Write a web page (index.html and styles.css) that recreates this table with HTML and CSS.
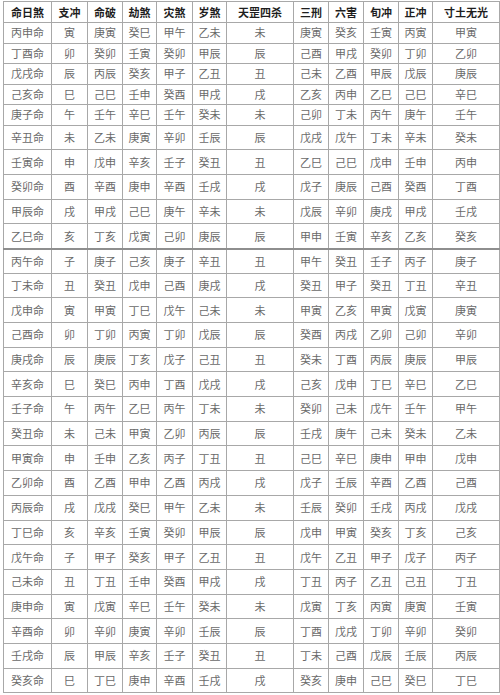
FILE: index.html
```html
<!DOCTYPE html>
<html lang="zh-CN">
<head>
<meta charset="utf-8">
<title>命日煞</title>
<link rel="stylesheet" href="styles.css">
</head>
<body>
<div class="page">
<table class="sha">
<colgroup>
<col class="c-name"><col class="c-1"><col class="c-2"><col class="c-3"><col class="c-4"><col class="c-5"><col class="c-wide"><col class="c-6"><col class="c-7"><col class="c-8"><col class="c-9"><col class="c-last">
</colgroup>
<thead>
<tr class="head"><th>命日煞</th><th>支冲</th><th>命破</th><th>劫煞</th><th>灾煞</th><th>岁煞</th><th>天罡四杀</th><th>三刑</th><th>六害</th><th>旬冲</th><th>正冲</th><th>寸土无光</th></tr>
</thead>
<tbody>
<tr class="short"><td>丙申命</td><td>寅</td><td>庚寅</td><td>癸巳</td><td>甲午</td><td>乙未</td><td>未</td><td>庚寅</td><td>癸亥</td><td>壬寅</td><td>丙寅</td><td>甲寅</td></tr>
<tr class="short"><td>丁酉命</td><td>卯</td><td>癸卯</td><td>壬寅</td><td>癸卯</td><td>甲辰</td><td>辰</td><td>己酉</td><td>甲戌</td><td>癸卯</td><td>丁卯</td><td>乙卯</td></tr>
<tr class="short"><td>戊戌命</td><td>辰</td><td>丙辰</td><td>癸亥</td><td>甲子</td><td>乙丑</td><td>丑</td><td>己未</td><td>乙酉</td><td>甲辰</td><td>戊辰</td><td>庚辰</td></tr>
<tr class="short"><td>己亥命</td><td>巳</td><td>己巳</td><td>壬申</td><td>癸酉</td><td>甲戌</td><td>戌</td><td>乙亥</td><td>丙申</td><td>乙巳</td><td>己巳</td><td>辛巳</td></tr>
<tr class="short"><td>庚子命</td><td>午</td><td>壬午</td><td>辛巳</td><td>壬午</td><td>癸未</td><td>未</td><td>己卯</td><td>丁未</td><td>丙午</td><td>庚午</td><td>壬午</td></tr>
<tr><td>辛丑命</td><td>未</td><td>乙未</td><td>庚寅</td><td>辛卯</td><td>壬辰</td><td>辰</td><td>戊戌</td><td>戊午</td><td>丁未</td><td>辛未</td><td>癸未</td></tr>
<tr><td>壬寅命</td><td>申</td><td>戊申</td><td>辛亥</td><td>壬子</td><td>癸丑</td><td>丑</td><td>乙巳</td><td>己巳</td><td>戊申</td><td>壬申</td><td>丙申</td></tr>
<tr><td>癸卯命</td><td>酉</td><td>辛酉</td><td>庚申</td><td>辛酉</td><td>壬戌</td><td>戌</td><td>戊子</td><td>庚辰</td><td>己酉</td><td>癸酉</td><td>丁酉</td></tr>
<tr><td>甲辰命</td><td>戌</td><td>甲戌</td><td>己巳</td><td>庚午</td><td>辛未</td><td>未</td><td>戊辰</td><td>辛卯</td><td>庚戌</td><td>甲戌</td><td>壬戌</td></tr>
<tr><td>乙巳命</td><td>亥</td><td>丁亥</td><td>戊寅</td><td>己卯</td><td>庚辰</td><td>辰</td><td>甲申</td><td>壬寅</td><td>辛亥</td><td>乙亥</td><td>癸亥</td></tr>
<tr class="split"><td>丙午命</td><td>子</td><td>庚子</td><td>己亥</td><td>庚子</td><td>辛丑</td><td>丑</td><td>甲午</td><td>癸丑</td><td>壬子</td><td>丙子</td><td>庚子</td></tr>
<tr><td>丁未命</td><td>丑</td><td>癸丑</td><td>戊申</td><td>己酉</td><td>庚戌</td><td>戌</td><td>癸丑</td><td>甲子</td><td>癸丑</td><td>丁丑</td><td>辛丑</td></tr>
<tr><td>戊申命</td><td>寅</td><td>甲寅</td><td>丁巳</td><td>戊午</td><td>己未</td><td>未</td><td>甲寅</td><td>乙亥</td><td>甲寅</td><td>戊寅</td><td>庚寅</td></tr>
<tr><td>己酉命</td><td>卯</td><td>丁卯</td><td>丙寅</td><td>丁卯</td><td>戊辰</td><td>辰</td><td>癸酉</td><td>丙戌</td><td>乙卯</td><td>己卯</td><td>辛卯</td></tr>
<tr><td>庚戌命</td><td>辰</td><td>庚辰</td><td>丁亥</td><td>戊子</td><td>己丑</td><td>丑</td><td>癸未</td><td>丁酉</td><td>丙辰</td><td>庚辰</td><td>甲辰</td></tr>
<tr><td>辛亥命</td><td>巳</td><td>癸巳</td><td>丙申</td><td>丁酉</td><td>戊戌</td><td>戌</td><td>己亥</td><td>戊申</td><td>丁巳</td><td>辛巳</td><td>乙巳</td></tr>
<tr><td>壬子命</td><td>午</td><td>丙午</td><td>乙巳</td><td>丙午</td><td>丁未</td><td>未</td><td>癸卯</td><td>己未</td><td>戊午</td><td>壬午</td><td>甲午</td></tr>
<tr><td>癸丑命</td><td>未</td><td>己未</td><td>甲寅</td><td>乙卯</td><td>丙辰</td><td>辰</td><td>壬戌</td><td>庚午</td><td>己未</td><td>癸未</td><td>乙未</td></tr>
<tr><td>甲寅命</td><td>申</td><td>壬申</td><td>乙亥</td><td>丙子</td><td>丁丑</td><td>丑</td><td>己巳</td><td>辛巳</td><td>庚申</td><td>甲申</td><td>戊申</td></tr>
<tr><td>乙卯命</td><td>酉</td><td>乙酉</td><td>甲申</td><td>乙酉</td><td>丙戌</td><td>戌</td><td>戊子</td><td>壬辰</td><td>辛酉</td><td>乙酉</td><td>己酉</td></tr>
<tr><td>丙辰命</td><td>戌</td><td>戊戌</td><td>癸巳</td><td>甲午</td><td>乙未</td><td>未</td><td>壬辰</td><td>癸卯</td><td>壬戌</td><td>丙戌</td><td>戊戌</td></tr>
<tr><td>丁巳命</td><td>亥</td><td>辛亥</td><td>壬寅</td><td>癸卯</td><td>甲辰</td><td>辰</td><td>戊申</td><td>甲寅</td><td>癸亥</td><td>丁亥</td><td>己亥</td></tr>
<tr><td>戊午命</td><td>子</td><td>甲子</td><td>癸亥</td><td>甲子</td><td>乙丑</td><td>丑</td><td>戊午</td><td>乙丑</td><td>甲子</td><td>戊子</td><td>丙子</td></tr>
<tr><td>己未命</td><td>丑</td><td>丁丑</td><td>壬申</td><td>癸酉</td><td>甲戌</td><td>戌</td><td>丁丑</td><td>丙子</td><td>乙丑</td><td>己丑</td><td>丁丑</td></tr>
<tr><td>庚申命</td><td>寅</td><td>戊寅</td><td>辛巳</td><td>壬午</td><td>癸未</td><td>未</td><td>戊寅</td><td>丁亥</td><td>丙寅</td><td>庚寅</td><td>壬寅</td></tr>
<tr><td>辛酉命</td><td>卯</td><td>辛卯</td><td>庚寅</td><td>辛卯</td><td>壬辰</td><td>辰</td><td>丁酉</td><td>戊戌</td><td>丁卯</td><td>辛卯</td><td>癸卯</td></tr>
<tr><td>壬戌命</td><td>辰</td><td>甲辰</td><td>辛亥</td><td>壬子</td><td>癸丑</td><td>丑</td><td>丁未</td><td>己酉</td><td>戊辰</td><td>壬辰</td><td>丙辰</td></tr>
<tr><td>癸亥命</td><td>巳</td><td>丁巳</td><td>庚申</td><td>辛酉</td><td>壬戌</td><td>戌</td><td>癸亥</td><td>庚申</td><td>己巳</td><td>癸巳</td><td>丁巳</td></tr>
</tbody>
</table>
</div>
</body>
</html>
```
FILE: styles.css
```css
html, body {
  margin: 0;
  padding: 0;
  background: #ffffff;
}

.page {
  padding: 1px 0 0 3px;
}

.sha {
  border-collapse: collapse;
  table-layout: fixed;
  width: 496px;
  font-family: "Noto Sans CJK SC", "Noto Sans", sans-serif;
  font-size: 11px;
  line-height: 1;
}

.c-name { width: 48px; }
.c-1 { width: 36px; }
.c-2 { width: 35px; }
.c-3 { width: 34px; }
.c-4 { width: 36px; }
.c-5 { width: 34px; }
.c-wide { width: 67px; }
.c-6 { width: 35px; }
.c-7 { width: 35px; }
.c-8 { width: 35px; }
.c-9 { width: 34px; }
.c-last { width: 67px; }

.sha th,
.sha td {
  border: 1px solid #a8a8a8;
  padding: 0;
  text-align: center;
  vertical-align: middle;
  white-space: nowrap;
  overflow: hidden;
}

.sha th {
  color: #1e1e1e;
  font-weight: 700;
  height: 20px;
}

.sha td {
  color: #6a6a6a;
  font-weight: 400;
  height: 23.7px;
}

.sha tr.short td {
  height: 19.5px;
}

.sha tr.split td {
  border-top: 2px solid #8e8e8e;
  height: 22.7px;
}
```
